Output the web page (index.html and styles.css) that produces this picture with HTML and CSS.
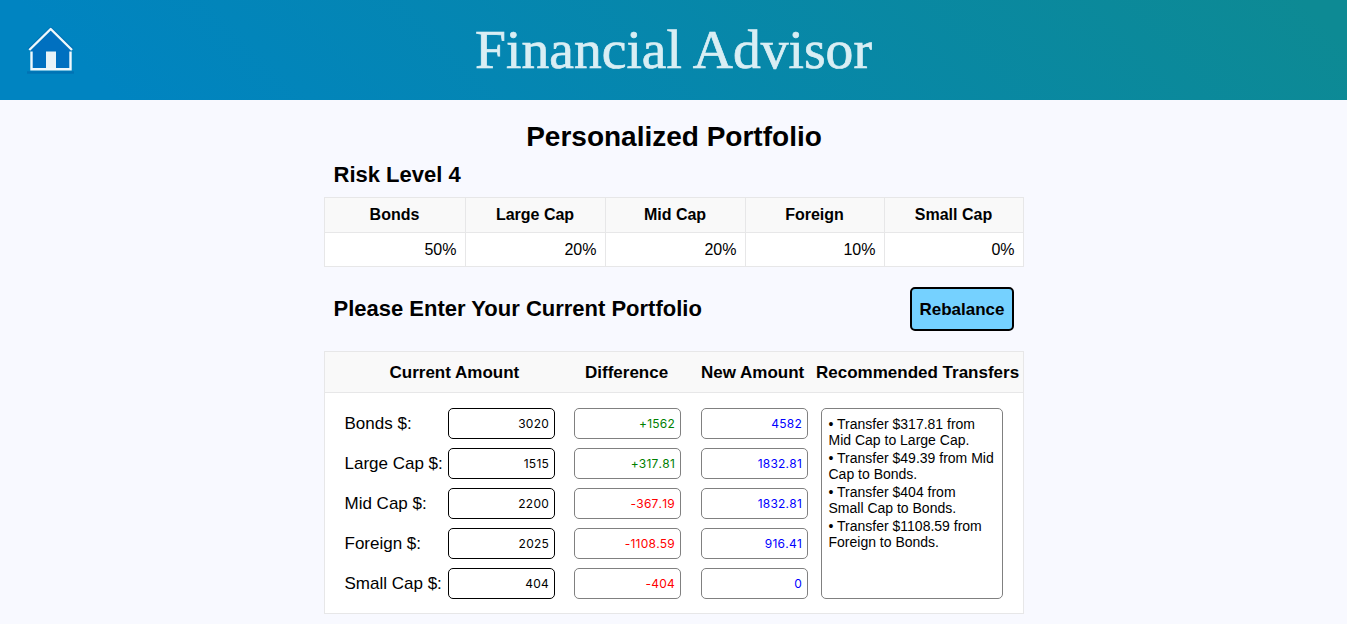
FILE: index.html
```
<!DOCTYPE html>
<html lang="en">
<head>
<meta charset="utf-8">
<title>Financial Advisor</title>
<link rel="stylesheet" href="styles.css">
</head>
<body>
<header class="banner">
  <a class="home" aria-label="Home">
    <svg width="50" height="50" viewBox="0 0 50 50" fill="none">
      <path d="M2 47.500H49" stroke="#0073b4" stroke-width="2.500"/>
      <path d="M6 25L25.500 4.500L46 25V44.500H6Z" fill="#0070c0"/>
      <path d="M4 24.800L25.700 4L47.300 24.800" stroke="#0073b9" stroke-width="4" stroke-linejoin="round"/>
      <path d="M4.300 25L25.700 4L47 25" stroke="#eff8fc" stroke-width="2.400" stroke-linejoin="round"/>
      <path d="M6.500 26.500V44.300H45.500V26.500" stroke="#eff8fc" stroke-width="2.400"/>
      <rect x="21" y="26.500" width="10" height="16.500" fill="#e8f3f8"/>
    </svg>
  </a>
  <span class="brand">Financial Advisor</span>
</header>
<main class="page">
  <h1 class="title">Personalized Portfolio</h1>
  <h2 class="subtitle">Risk Level 4</h2>
  <div class="risk">
    <div class="risk-head">Bonds</div><div class="risk-head">Large Cap</div><div class="risk-head">Mid Cap</div><div class="risk-head">Foreign</div><div class="risk-head">Small Cap</div>
    <div class="risk-cell">50%</div><div class="risk-cell">20%</div><div class="risk-cell">20%</div><div class="risk-cell">10%</div><div class="risk-cell">0%</div>
  </div>
  <div class="prompt">
    <h2 class="subtitle prompt-text">Please Enter Your Current Portfolio</h2>
    <button class="rebalance">Rebalance</button>
  </div>
  <section class="panel">
    <div class="panel-head">
      <span class="h-current">Current Amount</span><span class="h-col">Difference</span><span class="h-col">New Amount</span><span class="h-col">Recommended Transfers</span>
    </div>
    <div class="panel-body">
      <div class="rows">
        <span class="label">Bonds $:</span><span class="box own">3020</span><span class="box up">+1562</span><span class="box new">4582</span>
        <span class="label">Large Cap $:</span><span class="box own">1515</span><span class="box up">+317.81</span><span class="box new">1832.81</span>
        <span class="label">Mid Cap $:</span><span class="box own">2200</span><span class="box down">-367.19</span><span class="box new">1832.81</span>
        <span class="label">Foreign $:</span><span class="box own">2025</span><span class="box down">-1108.59</span><span class="box new">916.41</span>
        <span class="label">Small Cap $:</span><span class="box own">404</span><span class="box down">-404</span><span class="box new">0</span>
      </div>
      <div class="transfers">
        <p>• Transfer $317.81 from<br>Mid Cap to Large Cap.</p>
        <p>• Transfer $49.39 from Mid<br>Cap to Bonds.</p>
        <p>• Transfer $404 from<br>Small Cap to Bonds.</p>
        <p>• Transfer $1108.59 from<br>Foreign to Bonds.</p>
      </div>
    </div>
  </section>
</main>
</body>
</html>
```
FILE: styles.css
```
* { box-sizing: border-box; }
body {
  margin: 0;
  height: 624px;
  overflow: hidden;
  background: #f8f9ff;
  color: #000;
  font-family: "Liberation Sans", Arial, sans-serif;
}
h1, h2, p { margin: 0; }
.banner {
  display: grid;
  grid-template-columns: 1fr auto 1fr;
  height: 100px;
  padding: 0 25px;
  background: linear-gradient(45deg, #0084c1 8%, #0d8a94 97%);
}
.home { padding-top: 25px; height: 75px; }
.home svg { display: block; }
.brand {
  color: #d9eef4;
  font: 55.6px/98px "Liberation Serif", "Times New Roman", serif;
  -webkit-text-stroke: 0.7px #d9eef4;
  white-space: nowrap;
}
.page { width: 700px; margin: 0 auto 0 324px; }
.title {
  padding-top: 21px;
  font-size: 28px;
  line-height: 32px;
  text-align: center;
  white-space: nowrap;
}
.subtitle {
  padding: 9px 10px 0 9.5px;
  font-size: 22px;
  line-height: 26px;
  white-space: nowrap;
}
.risk {
  display: grid;
  grid-template-columns: 141px 140px 140px 139px 139px;
  grid-template-rows: 35px 34px;
  margin-top: 9px;
  border: solid #e7e7e8;
  border-width: 1px 0 0 1px;
  font-size: 16px;
  line-height: 33px;
}
.risk-head {
  background: #f9f9f9;
  border: solid #e7e7e8;
  border-width: 0 1px 1px 0;
  padding-right: 1px;
  font-weight: bold;
  text-align: center;
}
.risk-cell {
  padding-right: 8.5px;
  background: #fff;
  border: solid #e7e7e8;
  border-width: 0 1px 1px 0;
  text-align: right;
}
.prompt {
  display: flex;
  justify-content: space-between;
  align-items: center;
  height: 44px;
  margin: 20px 0;
  padding-right: 10px;
}
.prompt-text { padding-top: 0; }
.rebalance {
  width: 104px;
  height: 44px;
  padding: 1px 0 0;
  border: 2px solid #000;
  border-radius: 5px;
  background: #75d1ff;
  color: #000;
  font: bold 17px "Liberation Sans", Arial, sans-serif;
}
.panel { border: 1px solid #e7e7e8; background: #fff; height: 263px; }
.panel-head {
  display: grid;
  grid-template-columns: 64px 185px 116px 115px 1fr;
  height: 41px;
  border-bottom: 1px solid #e7e7e8;
  background: #f9f9f9;
  font-size: 17px;
  font-weight: bold;
  line-height: 41px;
  white-space: nowrap;
}
.h-current { grid-column: 2; padding-left: 0.5px; }
.h-col { padding-left: 11px; }
.panel-body { display: flex; gap: 13px; padding: 15px 20px; }
.rows {
  display: grid;
  grid-template-columns: 103px 126px 127px 107px;
  grid-auto-rows: 31px;
  row-gap: 9px;
}
.label { margin-left: -0.5px; font-size: 17px; line-height: 31px; white-space: nowrap; }
.box {
  width: 107px;
  padding-right: 5px;
  border: 1px solid #808080;
  border-radius: 5px;
  font: 12px/29px Inter, sans-serif;
  font-kerning: none;
  letter-spacing: 0.22px;
  text-align: right;
}
.own { border-color: #000; }
.up { color: #008000; }
.down { color: #f00; }
.new { color: #00f; }
.transfers {
  width: 182px;
  height: 191px;
  padding: 7px 0 0 6.5px;
  border: 1px solid #808080;
  border-radius: 5px;
  font-size: 14px;
  line-height: 16px;
  white-space: nowrap;
}
.transfers p { margin-bottom: 2px; }
```
